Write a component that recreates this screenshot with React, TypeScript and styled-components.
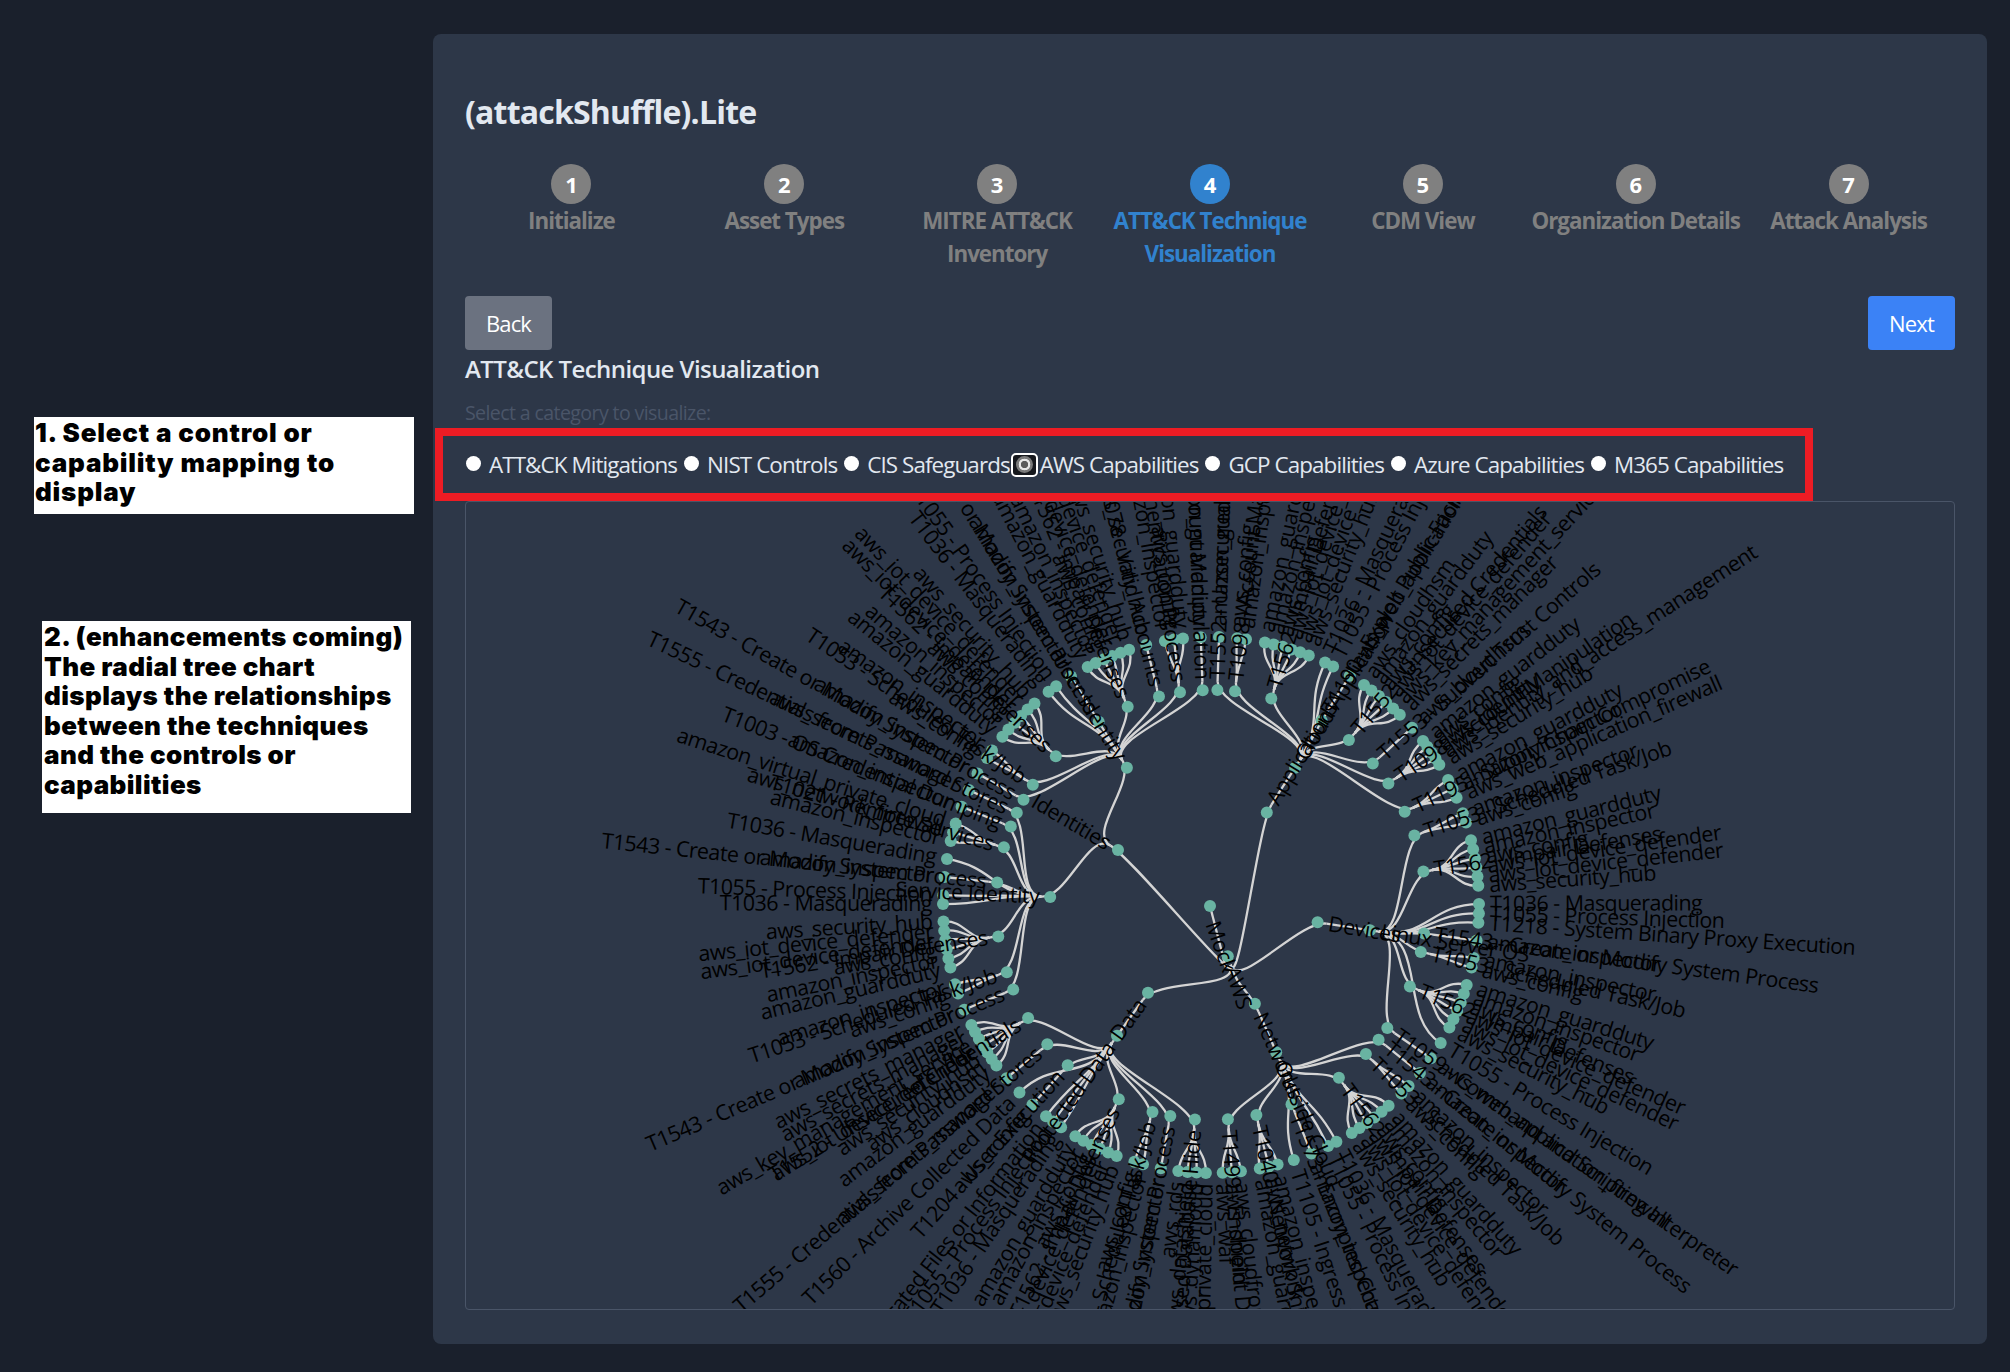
import React from "react";
import styled, { createGlobalStyle } from "styled-components";

const FONT = `"Open Sans", "Noto Sans", "Liberation Sans", sans-serif`;

const Global = createGlobalStyle`
  html, body { margin: 0; padding: 0; background: #1a202c; }
  body { font-family: ${FONT}; color: #e2e8f0; }
`;

const Page = styled.div`
  display: flex;
  width: 2010px;
  height: 1372px;
  overflow: hidden;
  background: #1a202c;
`;
const Notes = styled.aside`
  width: 433px;
  flex: none;
  display: flex;
  flex-direction: column;
`;
const Note = styled.div<{ $top: number; $left: number; $width: number; $height: number; $pad: number; $track: number }>`
  margin-top: ${(p) => p.$top}px;
  margin-left: ${(p) => p.$left}px;
  width: ${(p) => p.$width}px;
  height: ${(p) => p.$height}px;
  box-sizing: border-box;
  padding: 1px 0 0 ${(p) => p.$pad}px;
  background: #fff;
  color: #000;
  font-family: "Inter", "Liberation Sans", sans-serif;
  font-weight: 900;
  font-size: 26px;
  line-height: 29.5px;
  letter-spacing: ${(p) => p.$track}px;
  white-space: nowrap;
`;
const Panel = styled.main`
  width: 1554px;
  height: 1310px;
  margin-top: 34px;
  box-sizing: border-box;
  padding: 58px 32px 0;
  background: #2d3748;
  border-radius: 8px;
`;
const Title = styled.h1`
  margin: 0 0 32px;
  font-size: 32px;
  line-height: 40px;
  font-weight: 700;
  letter-spacing: -0.8px;
  color: #e2e8f0;
`;
const Steps = styled.ol`
  list-style: none;
  margin: 0 0 26px;
  padding: 0;
  display: grid;
  grid-template-columns: repeat(7, 1fr);
  height: 106px;
`;
const Step = styled.li<{ $active?: boolean }>`
  display: flex;
  flex-direction: column;
  align-items: center;
  text-align: center;
  color: ${(p) => (p.$active ? "#3182ce" : "#808080")};
`;
const StepDot = styled.span<{ $active?: boolean }>`
  width: 40px;
  height: 40px;
  border-radius: 50%;
  display: flex;
  align-items: center;
  justify-content: center;
  background: ${(p) => (p.$active ? "#3182ce" : "#808080")};
  color: #fff;
  font-size: 22px;
  font-weight: 700;
`;
const StepLabel = styled.span`
  font-size: 22.4px;
  line-height: 33px;
  font-weight: 700;
  letter-spacing: -1.02px;
  width: 212px;
`;
const Actions = styled.div`
  display: flex;
  justify-content: space-between;
`;
const Button = styled.button<{ $primary?: boolean }>`
  width: 87px;
  height: 54px;
  border: 0;
  border-radius: 4px;
  padding: 0;
  color: #fff;
  font-family: ${FONT};
  font-size: 22px;
  letter-spacing: -0.85px;
  background: ${(p) => (p.$primary ? "#3b82f6" : "#6b7280")};
`;
const Heading = styled.h2`
  margin: 1px 0 0;
  font-size: 24px;
  line-height: 36px;
  font-weight: 600;
  letter-spacing: -0.57px;
  color: #e2e8f0;
`;
const Hint = styled.p`
  margin: 14px 0 0;
  height: 24px;
  font-size: 19.6px;
  line-height: 24px;
  letter-spacing: -0.62px;
  color: #4a5568;
`;
const CategoryRow = styled.div`
  margin: 3px 0 0 -30px;
  width: 1378px;
  height: 73px;
  box-sizing: border-box;
  border: 8px solid #ed1c24;
  padding-left: 23px;
  display: flex;
  align-items: center;
  position: relative;
  z-index: 2;
`;
const Option = styled.label`
  display: flex;
  align-items: center;
  margin-right: 7px;
  font-size: 22.4px;
  letter-spacing: -0.9px;
  color: #e2e8f0;
  white-space: nowrap;
`;
const Radio = styled.input.attrs({ type: "radio", readOnly: true })`
  appearance: none;
  width: 15px;
  height: 15px;
  margin: 0 8px 3px 0;
  border-radius: 50%;
  background: #fff;
  flex: none;
  &:checked {
    margin: 0;
    width: 17px;
    height: 17px;
    background: radial-gradient(circle, #5b5b5b 0 3.4px, #e6e6e6 3.9px 5.6px, #7a7a7a 6.1px);
  }
`;
const FocusRing = styled.span`
  width: 27px;
  height: 24px;
  flex: none;
  box-sizing: border-box;
  margin: 0 2px 0 -6px;
  border: 2px solid #fff;
  border-radius: 5px;
  background: #16181d;
  display: flex;
  align-items: center;
  justify-content: center;
`;
const Chart = styled.section`
  width: 1490px;
  height: 809px;
  box-sizing: border-box;
  border: 1px solid #4a5568;
  border-radius: 4px;
  overflow: hidden;
`;
const ChartSvg = styled.svg`
  display: block;
  width: 1490px;
  height: 809px;
  margin: -1px;
`;
const Link = styled.path`
  fill: none;
  stroke: #d4d4d4;
  stroke-width: 2.3px;
`;
const Dot = styled.circle`
  fill: #69b3a2;
`;
const NodeText = styled.text`
  font-family: ${FONT};
  font-size: 21.5px;
  letter-spacing: -0.55px;
  fill: #000;
`;

/* ---------- radial tree data (angles in degrees, clockwise from east) ---------- */
const CX = 1211;
const CY = 905;
const R = [0, 54, 108, 161, 215, 268];
const HUB = 9;

type Leaf = { a: number; label: string };
type Tech = { a: number; label?: string; leaves: Leaf[] };
type Sub = { a: number; label: string; techs: Tech[] };
type Cat = { a: number; label: string; subs: Sub[] };

const leaf = (a: number, label: string): Leaf => ({ a, label });
const fan = (start: number, step: number, labels: string[]): Leaf[] =>
  labels.map((label, i) => leaf(start + step * i, label));
const tech = (a: number, label: string, leaves: Leaf[]): Tech => ({ a, label, leaves });
/* a technique that reaches the outer ring with no middle node */
const direct = (a: number, label: string): Tech => ({ a, leaves: [leaf(a, label)] });

const IMPAIR = [
  "amazon_guardduty",
  "amazon_inspector",
  "aws_config",
  "aws_iot_device_defender",
  "aws_iot_device_defender",
  "aws_security_hub",
];
const IMPAIR_REV = [...IMPAIR].reverse();
const SCHED = ["amazon_inspector", "aws_config"];
const D = "T1562 - Impair Defenses";
const SJ = "T1053 - Scheduled Task/Job";
const CM = "T1543 - Create or Modify System Process";
const MQ = "T1036 - Masquerading";
const PI = "T1055 - Process Injection";
const CS = "T1555 - Credentials from Password Stores";

const TREE: Cat[] = [
  {
    a: 210.6,
    label: "Identities",
    subs: [
      {
        a: 238.5,
        label: "User Identity",
        techs: [
          tech(214, SJ, [leaf(213.3, "aws_config"), leaf(215.2, "amazon_inspector")]),
          tech(209.3, CM, [leaf(209.4, "amazon_inspector")]),
          tech(223.8, D, fan(218.9, 1.98, IMPAIR)),
          direct(232.7, MQ),
          direct(234.7, PI),
          tech(238.5, CM, [leaf(238.5, "amazon_inspector")]),
          tech(247.2, D, fan(242.6, 1.92, IMPAIR)),
          tech(256, "T1078 - Valid Accounts", [leaf(256, "aws_security_hub")]),
          tech(261.7, "T1556 - Modify Authentication Process", fan(260.1, 1.95, ["amazon_inspector", "aws_config", "amazon_guardduty"])),
          tech(267.8, "T1098 - Account Manipulation", [leaf(267.8, "amazon_guardduty")]),
        ],
      },
      {
        a: 182.8,
        label: "Service Identity",
        techs: [
          tech(156.9, CM, [leaf(157, "amazon_inspector")]),
          tech(161.8, SJ, [leaf(160.7, "aws_config"), leaf(162.8, "amazon_inspector")]),
          tech(171.6, D, fan(166.5, 2, IMPAIR)),
          direct(180.2, MQ),
          direct(182.1, PI),
          tech(186, CM, [leaf(186, "amazon_inspector")]),
          direct(189.9, MQ),
          tech(195.6, "T1021 - Remote Services", fan(193.8, 1.95, ["amazon_inspector", "aws_network_firewall", "amazon_virtual_private_cloud"])),
          tech(201.4, "T1003 - OS Credential Dumping", [leaf(201.5, "amazon_inspector")]),
          tech(205.4, CS, [leaf(205.4, "aws_secrets_manager")]),
        ],
      },
    ],
  },
  {
    a: 301.1,
    label: "Applications",
    subs: [
      {
        a: 301.5,
        label: "Cloud Application",
        techs: [
          tech(271.7, "T1552 - Unsecured Credentials", [leaf(271.7, "amazon_guardduty")]),
          tech(276.4, "T1098 - Account Manipulation", fan(275.6, 1.9, ["aws_config", "amazon_inspector"])),
          tech(286.3, D, fan(281.6, 1.96, IMPAIR)),
          direct(295.2, MQ),
          direct(297.1, PI),
          tech(301, "T1190 - Exploit Public-Facing Application", [leaf(301.2, "aws_web_application_firewall")]),
          tech(309.9, "T1552 - Unsecured Credentials", fan(304.8, 2, ["aws_cloudhsm", "amazon_guardduty", "aws_config", "aws_iot_device_defender", "aws_key_management_service", "aws_secrets_manager"])),
          tech(318.8, "T1553 - Subvert Trust Controls", [leaf(318.6, "aws_cloudhsm")]),
          tech(325.6, "T1098 - Account Manipulation", fan(322.3, 1.53, ["amazon_guardduty", "aws_config", "aws_identity", "aws_identity_and_access_management", "aws_security_hub"])),
          tech(334.3, "T1195 - Supply Chain Compromise", fan(332.2, 2.1, ["amazon_guardduty", "amazon_inspector", "aws_web_application_firewall"])),
        ],
      },
    ],
  },
  {
    a: 9.2,
    label: "Devices",
    subs: [
      {
        a: 9,
        label: "Linux Server OS",
        techs: [
          tech(341.1, SJ, fan(340, 2.1, SCHED)),
          tech(351, D, fan(346, 1.98, IMPAIR)),
          direct(359.8, MQ),
          direct(361.8, PI),
          direct(363.8, "T1218 - System Binary Proxy Execution"),
          tech(7.6, CM, [leaf(7.6, "amazon_inspector")]),
          tech(12.6, SJ, fan(11.4, 2.1, SCHED)),
          tech(22.3, D, fan(17.4, 1.96, IMPAIR)),
          direct(31, PI),
          tech(34.9, "T1059 - Command and Scripting Interpreter", [leaf(34.9, "aws_web_application_firewall")]),
        ],
      },
    ],
  },
  {
    a: 66,
    label: "Networks",
    subs: [
      {
        a: 66.1,
        label: "Outside Cloud",
        techs: [
          tech(38.8, CM, [leaf(38.8, "amazon_inspector")]),
          tech(43.9, SJ, fan(42.5, 2.2, SCHED)),
          tech(53.5, D, fan(48.5, 1.96, IMPAIR)),
          direct(62.1, MQ),
          direct(64.1, PI),
          tech(68, "T1573 - Encrypted Channel", [leaf(68, "amazon_inspector")]),
          direct(72, "T1105 - Ingress Tool Transfer"),
          tech(77.8, "T1040 - Network Sniffing", fan(75.6, 1.95, ["amazon_inspector", "aws_network_firewall", "amazon_guardduty"])),
          tech(85.5, "T1499 - Endpoint Denial of Service", fan(83.6, 1.95, ["aws_cloudfront", "aws_shield", "aws_waf"])),
        ],
      },
    ],
  },
  {
    a: 125.7,
    label: "Data",
    subs: [
      {
        a: 125.7,
        label: "Protected Data",
        techs: [
          tech(94.3, "T1190 - Exposed Database Hide", fan(91.1, 1.97, ["amazon_virtual_private_cloud", "aws_dynamodb", "aws_datashield", "aws_rds"])),
          tech(100.9, CM, [leaf(100.8, "amazon_inspector")]),
          tech(105.8, SJ, [leaf(104.7, "amazon_inspector"), leaf(106.6, "aws_config")]),
          tech(115.4, D, fan(110.6, 1.96, IMPAIR_REV)),
          direct(124, MQ),
          direct(126.1, PI),
          direct(128, "T1027 - Obfuscated Files or Information"),
          tech(131.8, "T1204 - User Execution", [leaf(131.8, "aws_config")]),
          direct(135.6, "T1560 - Archive Collected Data"),
          tech(139.6, CS, [leaf(139.7, "aws_secrets_manager")]),
          tech(148.3, "T1552 - Unsecured Credentials", fan(143.2, 1.7, ["amazon_guardduty", "aws_cloudhsm", "aws_security_hub", "aws_iot_device_defender", "aws_key_management_service", "aws_secrets_manager", "aws_secrets_manager"])),
        ],
      },
    ],
  },
];

const ROOT_A = 70.6;
const rad = (a: number) => (a * Math.PI) / 180;
const pt = (a: number, r: number): [number, number] => [CX + r * Math.cos(rad(a)), CY + r * Math.sin(rad(a))];
const f = (n: number) => n.toFixed(1);

/* d3.linkRadial: midway radius on each end's own angle */
const radial = (a0: number, r0: number, a1: number, r1: number) => {
  const m = (r0 + r1) / 2;
  const [x0, y0] = pt(a0, r0);
  const [x1, y1] = pt(a0, m);
  const [x2, y2] = pt(a1, m);
  const [x3, y3] = pt(a1, r1);
  return `M${f(x0)},${f(y0)}C${f(x1)},${f(y1)} ${f(x2)},${f(y2)} ${f(x3)},${f(y3)}`;
};

const links: string[] = [];
const dots: [number, number][] = [];
const labels: { a: number; r: number; text: string }[] = [];

function add(a: number, r: number, text?: string) {
  dots.push(pt(a, r));
  if (text) labels.push({ a, r, text });
}

dots.push([1210, 906]);
links.push("M1210,906L1226,968");
add(ROOT_A + 1.3, R[1], "AWS");

for (const cat of TREE) {
  links.push(radial(ROOT_A + 1.3, R[1] + HUB, cat.a, R[2] + HUB));
  add(cat.a, R[2], cat.label);
  for (const sub of cat.subs) {
    links.push(radial(cat.a, R[2] + HUB, sub.a, R[3] + HUB));
    add(sub.a, R[3], sub.label);
    for (const t of sub.techs) {
      if (t.label) {
        links.push(radial(sub.a, R[3] + HUB, t.a, R[4] + HUB));
        add(t.a, R[4], t.label);
        for (const l of t.leaves) {
          links.push(radial(t.a, R[4] + HUB, l.a, R[5]));
          add(l.a, R[5], l.label);
        }
      } else {
        const l = t.leaves[0];
        links.push(radial(sub.a, R[3] + HUB, l.a, R[5]));
        add(l.a, R[5], l.label);
      }
    }
  }
}

const LABEL_GAP = 11;

function Label({ a, r, text }: { a: number; r: number; text: string }) {
  const n = ((a % 360) + 360) % 360;
  const left = n > 90 && n < 270;
  const [x, y] = pt(a, r + LABEL_GAP);
  return (
    <NodeText
      x={f(x)}
      y={f(y)}
      dy="0.33em"
      textAnchor={left ? "end" : "start"}
      transform={`rotate(${f(left ? a + 180 : a)} ${f(x)} ${f(y)})`}
    >
      {text}
    </NodeText>
  );
}

function RadialTree() {
  return (
    <ChartSvg viewBox="465 501 1490 809">
      {links.map((d, i) => (
        <Link key={i} d={d} />
      ))}
      {dots.map(([x, y], i) => (
        <Dot key={i} cx={f(x)} cy={f(y)} r={6} />
      ))}
      <NodeText x="1212" y="922" dy="0.33em" transform="rotate(70.6 1212 922)">
        Mock
      </NodeText>
      {labels.map((l, i) => (
        <Label key={i} {...l} />
      ))}
    </ChartSvg>
  );
}

const STEPS = [
  "Initialize",
  "Asset Types",
  "MITRE ATT&CK Inventory",
  "ATT&CK Technique Visualization",
  "CDM View",
  "Organization Details",
  "Attack Analysis",
];
const CATEGORIES = [
  "ATT&CK Mitigations",
  "NIST Controls",
  "CIS Safeguards",
  "AWS Capabilities",
  "GCP Capabilities",
  "Azure Capabilities",
  "M365 Capabilities",
];
const SELECTED = 3;

export default function App() {
  return (
    <Page>
      <Global />
      <Notes>
        <Note $top={417} $left={34} $width={380} $height={97} $pad={1} $track={0.8}>
          1. Select a control or
          <br />
          capability mapping to
          <br />
          display
        </Note>
        <Note $top={107} $left={42} $width={369} $height={192} $pad={2} $track={0.4}>
          2. (enhancements coming)
          <br />
          The radial tree chart
          <br />
          displays the relationships
          <br />
          between the techniques
          <br />
          and the controls or
          <br />
          capabilities
        </Note>
      </Notes>
      <Panel>
        <Title>(attackShuffle).Lite</Title>
        <Steps>
          {STEPS.map((s, i) => (
            <Step key={s} $active={i === 3}>
              <StepDot $active={i === 3}>{i + 1}</StepDot>
              <StepLabel>{s}</StepLabel>
            </Step>
          ))}
        </Steps>
        <Actions>
          <Button>Back</Button>
          <Button $primary>Next</Button>
        </Actions>
        <Heading>ATT&amp;CK Technique Visualization</Heading>
        <Hint>Select a category to visualize:</Hint>
        <CategoryRow>
          {CATEGORIES.map((c, i) => (
            <Option key={c}>
              {i === SELECTED ? (
                <FocusRing>
                  <Radio checked name="category" />
                </FocusRing>
              ) : (
                <Radio name="category" />
              )}
              {c}
            </Option>
          ))}
        </CategoryRow>
        <Chart>
          <RadialTree />
        </Chart>
      </Panel>
    </Page>
  );
}
